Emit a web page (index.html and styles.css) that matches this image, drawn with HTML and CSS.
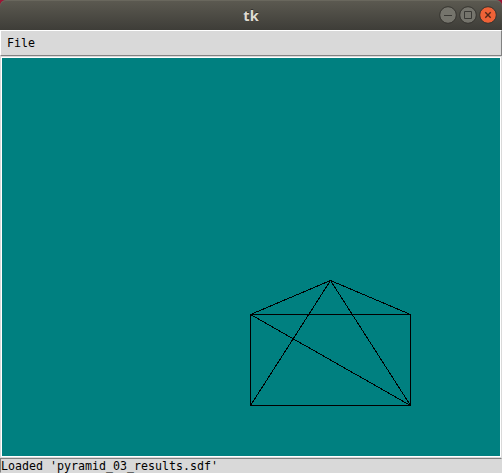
FILE: index.html
```html
<!DOCTYPE html>
<html lang="en">
<head>
<meta charset="utf-8">
<title>tk</title>
<link rel="stylesheet" href="styles.css">
</head>
<body>
<div class="window">
  <header class="titlebar">
    <span class="title">tk</span>
    <div class="controls">
      <svg class="control" viewBox="0 0 18 18"><circle class="disc" cx="9" cy="9" r="8.3"/><path class="glyph" d="M5 9.5h8"/></svg>
      <svg class="control" viewBox="0 0 18 18"><circle class="disc" cx="9" cy="9" r="8.3"/><path class="glyph" d="M5.5 5.5h7v7h-7z"/></svg>
      <svg class="control close" viewBox="0 0 18 18"><circle class="disc" cx="9" cy="9" r="8.3"/><path class="glyph" d="M6.3 6.3l5.4 5.4M11.7 6.3l-5.4 5.4"/></svg>
    </div>
  </header>
  <nav class="menubar"><span class="menu">File</span></nav>
  <main class="canvas">
    <svg class="drawing" viewBox="2 58 498 398">
      <path d="M250.5 314.5H410.5V405.5H250.5ZL330.5 280.5L410.5 314.5M250.5 405.5L330.5 280.5L410.5 405.5L250.5 314.5"/>
    </svg>
  </main>
  <footer class="status">Loaded 'pyramid_03_results.sdf'</footer>
</div>
</body>
</html>
```
FILE: styles.css
```css
* { box-sizing: border-box; }
body { margin: 0; background: #9d1434; overflow: hidden; }
.window {
  width: 502px;
  height: 473px;
  display: flex;
  flex-direction: column;
  color: #000;
  font: 11.63px/13px "DejaVu Sans Mono", monospace;
}
.titlebar {
  height: 30px;
  display: grid;
  grid-template-columns: 1fr auto 1fr;
  align-items: center;
  padding-right: 5px;
  padding-left: 5px;
  border-radius: 6px 6px 0 0;
  background: linear-gradient(#5c5a51, #3e3d38);
  box-shadow: inset 0 1px #69675d;
}
.title {
  grid-column: 2;
  color: #dfdbd2;
  font: bold 14.5px/20px "Noto Sans", sans-serif;
  text-shadow: 0 -1px #302f2b;
}
.controls { display: flex; justify-content: flex-end; gap: 2px; }
.control { width: 18px; height: 18px; }
.disc { fill: #75746c; stroke: #35342f; stroke-width: 1; }
.glyph { fill: none; stroke: #3a3935; stroke-width: 1; }
.close .disc { fill: #ef6237; }
.close .glyph { stroke: #532719; stroke-width: 1.4; }
.menubar {
  height: 26px;
  padding: 6px;
  background: #d9d9d9;
  border: 1px solid;
  border-color: #fff #828282 #828282 #fff;
}
.menu { display: block; }
.canvas {
  height: 402px;
  padding: 1px;
  background: #fff;
  border: 1px solid #d9d9d9;
}
.drawing { display: block; width: 498px; height: 398px; background: #008080; }
.drawing path { fill: none; stroke: #000; stroke-width: 1; shape-rendering: crispEdges; }
.status {
  height: 15px;
  line-height: 14px;
  background: #d9d9d9;
  border: 1px solid;
  border-color: #828282 #d9d9d9 #d9d9d9 #828282;
}
```
